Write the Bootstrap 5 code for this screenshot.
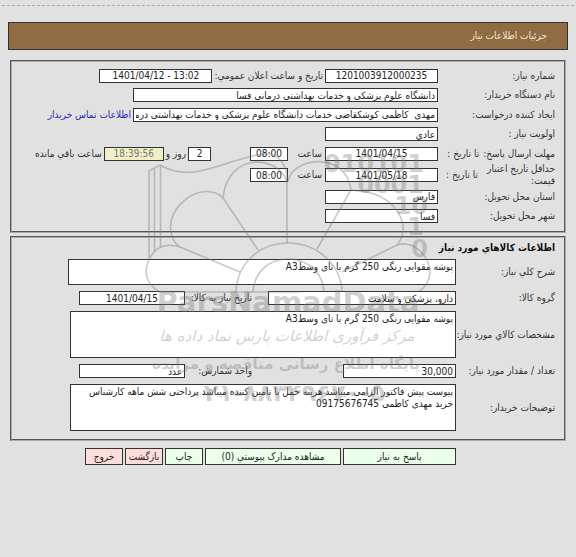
<!DOCTYPE html>
<html lang="fa" dir="rtl">
<head>
<meta charset="utf-8">
<meta name="viewport" content="width=device-width, initial-scale=1">
<title>جزئیات اطلاعات نیاز</title>
<link href="https://cdn.jsdelivr.net/npm/bootstrap@5.3.0/dist/css/bootstrap.min.css" rel="stylesheet">
<style>
body{background:#e1e1e1;color:#333;font-family:"DejaVu Sans Condensed","DejaVu Sans",sans-serif;font-size:10px;line-height:12px}
.page-top{border-top:1px dashed #aaa;margin:5px 2px 16px}
.page-title{background:#8f6c41;border:1px solid #333;color:#f3ead9;font-size:10px;line-height:12px;padding:7px 20px;margin:0 8px 10px}
.panel{border:2px groove #aaa;margin:0 10px 3px;padding:4px 9px 5px}
.line-item{min-height:19px}
.line-item:nth-child(even){min-height:20px}
.name-col{width:117px;flex:none}
.goods{display:flex;flex-direction:column;gap:6px;padding-bottom:8px}
.goods .name-col{width:99px}
.goods h2{font-size:10px;line-height:12px;font-weight:bold;color:#111;margin:0 0 -1px}
.field{background:#fff;border:1px solid #333;border-radius:0;color:#222;font:inherit;height:14px;line-height:12px;padding:0 2px;min-width:0;resize:none;display:block}
textarea.field{height:47px;overflow:hidden;padding-top:1px}
textarea.short{height:26px}
.num{text-align:center}
.w-date{width:113px}.w-time{width:38px}.w-day{width:23px}.w-left{width:60px}
.w-org{width:305px}.w-area{width:386px}.w-wide{width:388px}.w-group{width:188px}.w-need{width:106px}
.field.countdown{background:#f0efc8;color:#777}
.pad-side{padding:0 2px}
.clock-name{width:37px;padding-right:3px;flex:none}
.days{margin-right:39px}
.until{width:77px}
.side-name{width:83px;flex:none;padding-right:16px}
.unit-name{width:158px;padding-right:91px}
.contact{color:#2a2ab8;text-decoration:none}
.act{background:#eaffea;border:1px solid #333;border-radius:0;color:#222;font:inherit;height:17px;padding:0;line-height:14px}
.act-stop{background:#ffdcdc}
.w-reply{width:113px}.w-docs{width:136px}
.actions{gap:2px;padding:4px 120px 0 0}
.watermark{position:absolute;top:140px;left:0;right:0;pointer-events:none;z-index:2}
</style>
</head>
<body class="position-relative">
<hr class="page-top border-bottom-0 opacity-100">
<h1 class="page-title">جزئیات اطلاعات نیاز</h1>
<form>
<section class="panel">
  <div class="line-item d-flex align-items-center">
    <label class="name-col" for="no">شماره نیاز:</label><input id="no" class="field num w-date" dir="ltr" value="1201003912000235">
    <label class="pad-side text-nowrap" for="pub">تاریخ و ساعت اعلان عمومي:</label><input id="pub" class="field num w-date" dir="ltr" value="1401/04/12 - 13:02">
  </div>
  <div class="line-item d-flex align-items-center">
    <label class="name-col" for="org">نام دستگاه خریدار:</label><input id="org" class="field w-org" value="دانشگاه علوم پزشکی و خدمات بهداشتی درمانی فسا">
  </div>
  <div class="line-item d-flex align-items-center">
    <label class="name-col" for="by">ایجاد کننده درخواست:</label><input id="by" class="field w-org" value="مهدی  کاظمی کوشکقاضی خدمات دانشگاه علوم پزشکی و خدمات بهداشتی درمانی فسا">
    <a class="contact text-nowrap pad-side" href="#">اطلاعات تماس خریدار</a>
  </div>
  <div class="line-item d-flex align-items-center">
    <label class="name-col" for="pri">اولویت نیاز :</label><input id="pri" class="field w-date" value="عادي">
  </div>
  <div class="line-item d-flex align-items-center">
    <div class="name-col d-flex text-nowrap"><label for="dl">مهلت ارسال پاسخ:</label><span class="pe-1">تا تاریخ :</span></div>
    <input id="dl" class="field num w-date" dir="ltr" value="1401/04/15">
    <label class="clock-name" for="t1">ساعت</label><input id="t1" class="field num w-time" dir="ltr" value="08:00">
    <input id="days" class="field num w-day days" value="2"><label class="pad-side" for="days">روز و</label>
    <input id="left" class="field num w-left countdown" dir="ltr" value="18:39:56"><label class="pad-side text-nowrap" for="left">ساعت باقي مانده</label>
  </div>
  <div class="line-item d-flex align-items-center">
    <div class="name-col d-flex align-items-center"><label class="until" for="vl">حداقل تاریخ اعتبار قیمت:</label><span class="text-nowrap">تا تاریخ :</span></div>
    <input id="vl" class="field num w-date" dir="ltr" value="1401/05/18">
    <label class="clock-name" for="t2">ساعت</label><input id="t2" class="field num w-time" dir="ltr" value="08:00">
  </div>
  <div class="line-item d-flex align-items-center">
    <label class="name-col" for="prov">استان محل تحویل:</label><input id="prov" class="field w-date" value="فارس">
  </div>
  <div class="line-item d-flex align-items-center">
    <label class="name-col" for="city">شهر محل تحویل:</label><input id="city" class="field w-date" value="فسا">
  </div>
</section>
<section class="panel goods">
  <h2>اطلاعات کالاهاي مورد نیاز</h2>
  <div class="d-flex align-items-center"><label class="name-col" for="desc">شرح کلي نیاز:</label><textarea id="desc" class="field short w-wide">پوشه مقوایی رنگی 250 گرم با تای وسطA3</textarea></div>
  <div class="d-flex align-items-center"><label class="name-col" for="grp">گروه کالا:</label><input id="grp" class="field w-group" value="دارو، پزشکي و سلامت"><label class="side-name" for="need">تاریخ نیاز به کالا:</label><input id="need" class="field num w-need" dir="ltr" value="1401/04/15"></div>
  <div class="d-flex align-items-center"><label class="name-col text-nowrap" for="spec">مشخصات کالاي مورد نیاز:</label><textarea id="spec" class="field w-area">پوشه مقوایی رنگی 250 گرم با تای وسطA3</textarea></div>
  <div class="d-flex align-items-center"><label class="name-col text-nowrap" for="qty">تعداد / مقدار مورد نیاز:</label><input id="qty" class="field w-date" value="30,000"><label class="side-name unit-name" for="unit">واحد شمارش:</label><input id="unit" class="field w-need" value="عدد"></div>
  <div class="d-flex align-items-center"><label class="name-col" for="note">توضیحات خریدار:</label><textarea id="note" class="field w-area">پیوست پیش فاکتور الزامی میباشد هزینه حمل با تامین کننده میباشد پرداختی شش ماهه کارشناس خرید مهدی کاظمی 09175676745</textarea></div>
</section>
<div class="actions d-flex">
  <button type="button" class="act w-reply">پاسخ به نیاز</button>
  <button type="button" class="act w-docs">مشاهده مدارک پیوستي (0)</button>
  <button type="button" class="act w-time">چاپ</button>
  <button type="button" class="act act-stop w-time">بازگشت</button>
  <button type="button" class="act act-stop w-time">خروج</button>
</div>
</form>
<svg class="watermark d-block mx-auto" width="300" height="270" viewBox="138 140 300 270" direction="ltr" aria-hidden="true">
  <g fill="none" stroke="#777" stroke-opacity=".4" stroke-width="1.6">
    <path d="M236 292C237 264 259 243 288 243S341 264 342 292M253 292C254 273 268 259 288 259S323 273 324 292"/>
    <path d="M287 243V176C286 166 279 152 263 154C240 157 225 166 200 171C184 174 170 171 160 165L149 171V258M154.500 168V251M160.500 165V247"/>
    <path d="M287 182C280 156 228 150 223 198L258 250M223 198C203 178 162 208 172 236Q174 243 180 247L240 272M180 247C162 241 148 251 146 272Q147 285 160 292H300"/>
    <path d="M288 182C291 157 346 150 351 190L317 249M351 190Q360 191 367 192C393 197 414 224 397 245L342 272M397 245C412 240 429 254 430 272Q429 286 418 292"/>
  </g>
  <g fill="#777" fill-opacity=".35" font-family="DejaVu Sans, sans-serif" font-weight="bold">
    <g font-size="24" text-anchor="end"><text x="424" y="172">010101</text><text x="424" y="193">0001</text><text x="428" y="214">10</text><text x="424" y="235">1</text><text x="428" y="257">0</text></g>
    <g text-anchor="middle">
      <text x="288" y="312" font-size="29">ParsNamadData</text>
      <text x="287" y="341" font-size="15" font-weight="normal" font-style="italic">مرکز فرآوری اطلاعات پارس نماد داده ها</text>
      <text x="286" y="369" font-size="15">پایگاه اطلاع رسانی مناقصه و مزایده</text>
      <text x="287" y="401" font-size="24">۰۲۱-۸۸۳۴۹۶۷۰-۵</text>
    </g>
  </g>
</svg>
<script src="https://cdn.jsdelivr.net/npm/bootstrap@5.3.0/dist/js/bootstrap.bundle.min.js"></script>
</body>
</html>
